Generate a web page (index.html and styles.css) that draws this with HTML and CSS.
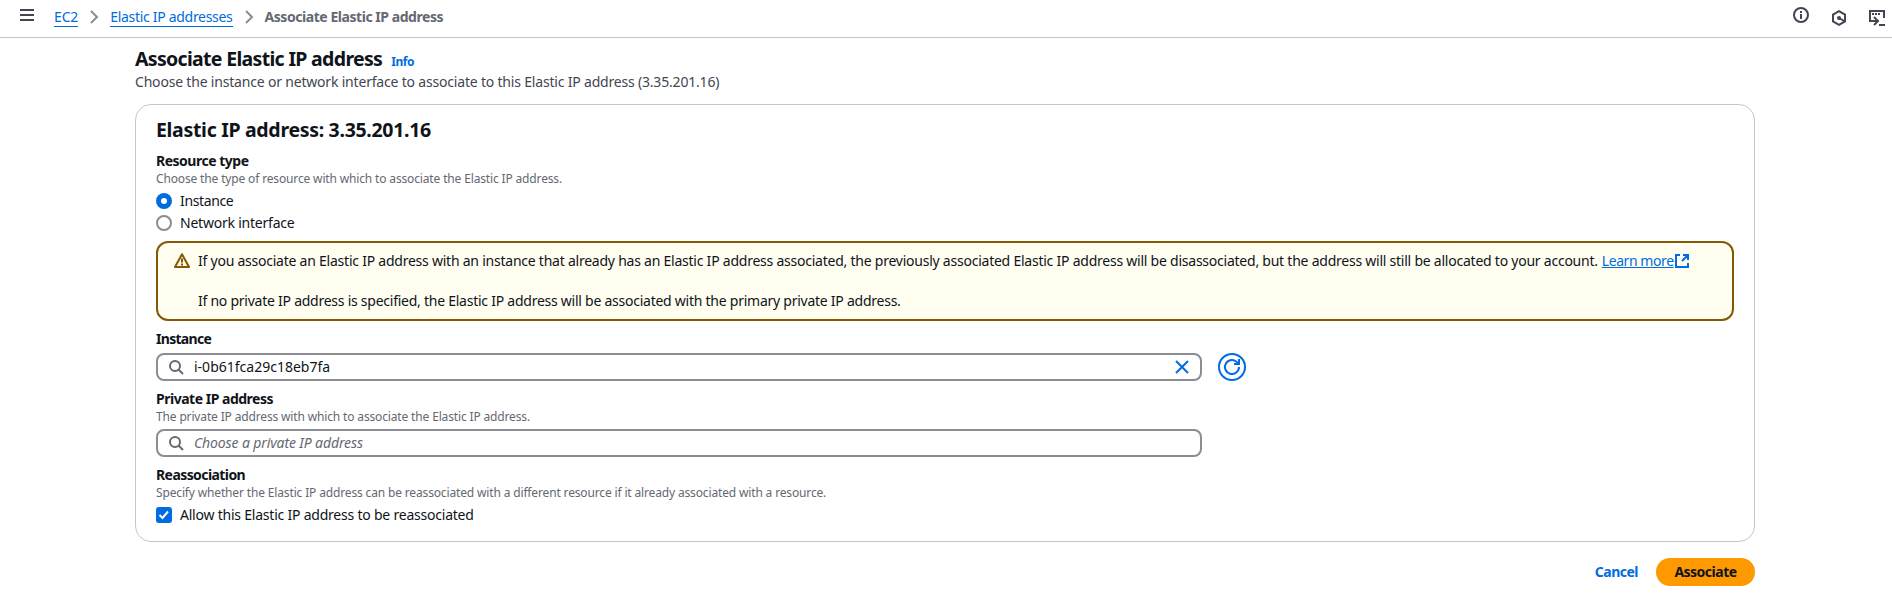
FILE: index.html
```html
<!DOCTYPE html>
<html lang="en">
<head>
<meta charset="utf-8">
<title>Associate Elastic IP address</title>
<link rel="stylesheet" href="styles.css">
</head>
<body>
<header class="topbar">
  <svg class="menu" width="16" height="16" viewBox="0 0 16 16"><path d="M1 3h14M1 8h14M1 13h14" fill="none" stroke="#424650" stroke-width="2"/></svg>
  <nav class="crumbs">
    <a class="crumb crumb-ec2" href="#">EC2</a>
    <svg class="sep" width="16" height="16" viewBox="0 0 16 16"><path d="M5 2l6 6-6 6" fill="none" stroke="#8c8c94" stroke-width="2"/></svg>
    <a class="crumb crumb-eips" href="#">Elastic IP addresses</a>
    <svg class="sep" width="16" height="16" viewBox="0 0 16 16"><path d="M5 2l6 6-6 6" fill="none" stroke="#8c8c94" stroke-width="2"/></svg>
    <span class="crumb-current">Associate Elastic IP address</span>
  </nav>
  <div class="tools">
    <svg class="tool-info" width="16" height="16" viewBox="0 0 16 16" fill="none" stroke="#424650" stroke-width="2"><circle cx="8" cy="8" r="7"/><path d="M8 7v5M8 4v2"/></svg>
    <svg class="tool-low" width="16" height="16" viewBox="0 0 16 16" fill="none" stroke="#424650" stroke-width="2"><path d="M8 1.200l6 3.400v6.800l-6 3.400-6-3.400V4.600z"/><path d="M8 8l6 3.500"/><circle cx="8" cy="8" r="2" fill="#424650" stroke="none"/></svg>
    <svg class="tool-low" width="16" height="16" viewBox="0 0 16 16" fill="none" stroke="#424650" stroke-width="2"><path d="M15 8V1H1v10h7"/><path d="M5 7l4 4-4 4M10 15h6"/><path d="M3 4h2M6 4h2M9 4h2"/></svg>
  </div>
</header>
<main class="page">
  <div class="heading"><h1 class="title">Associate Elastic IP address</h1><a class="info" href="#">Info</a></div>
  <p class="desc">Choose the instance or network interface to associate to this Elastic IP address (3.35.201.16)</p>
  <section class="card">
    <h2 class="card-title">Elastic IP address: 3.35.201.16</h2>
    <div class="field">
      <div class="label">Resource type</div>
      <div class="help">Choose the type of resource with which to associate the Elastic IP address.</div>
      <div class="options">
        <label class="option option-instance"><span class="radio radio-on"></span>Instance</label>
        <label class="option"><span class="radio"></span>Network interface</label>
      </div>
    </div>
    <div class="alert">
      <svg class="warn" width="16" height="16" viewBox="0 0 16 16" fill="none" stroke="#855900" stroke-width="2"><path d="M8 1.200L15 14H1z" stroke-linejoin="round"/><path d="M8 5.500v4M8 10.500v2"/></svg>
      <div class="alert-text">
        <p class="alert-main"><span>If you associate an Elastic IP address with an instance that already has an Elastic IP address associated, the previously associated Elastic IP address will be disassociated, but the address will still be allocated to your account.</span><a class="learn" href="#">Learn more</a><svg class="ext" width="16" height="16" viewBox="0 0 16 16" fill="none" stroke="#006ce0" stroke-width="2"><path d="M6 2H2v12h12v-4M9 2h5v5M14 2L8 8"/></svg></p>
        <p class="alert-note">If no private IP address is specified, the Elastic IP address will be associated with the primary private IP address.</p>
      </div>
    </div>
    <div class="field">
      <div class="label label-instance">Instance</div>
      <div class="control-row">
        <div class="input">
          <svg width="16" height="16" viewBox="0 0 16 16" fill="none" stroke="#656871" stroke-width="2"><circle cx="7" cy="7" r="5"/><path d="M10.500 10.500L15 15"/></svg>
          <span class="value">i-0b61fca29c18eb7fa</span>
          <svg class="clear" width="16" height="16" viewBox="0 0 16 16" fill="none" stroke="#006ce0" stroke-width="2"><path d="M2 2l12 12M14 2L2 14"/></svg>
        </div>
        <button class="refresh" aria-label="Refresh"><svg width="16" height="16" viewBox="0 0 16 16" fill="none" stroke="#006ce0" stroke-width="2"><path d="M15 8a7 7 0 1 1-2-4.900L15 5M10 5h5V0"/></svg></button>
      </div>
    </div>
    <div class="field">
      <div class="label">Private IP address</div>
      <div class="help">The private IP address with which to associate the Elastic IP address.</div>
      <div class="control-row">
        <div class="input">
          <svg width="16" height="16" viewBox="0 0 16 16" fill="none" stroke="#656871" stroke-width="2"><circle cx="7" cy="7" r="5"/><path d="M10.500 10.500L15 15"/></svg>
          <span class="placeholder">Choose a private IP address</span>
        </div>
      </div>
    </div>
    <div class="field">
      <div class="label label-re">Reassociation</div>
      <div class="help">Specify whether the Elastic IP address can be reassociated with a different resource if it already associated with a resource.</div>
      <div class="options">
        <label class="option"><span class="check"><svg width="16" height="16" viewBox="0 0 16 16"><path d="M3.500 8l3 3L12 4.500" fill="none" stroke="#fff" stroke-width="2"/></svg></span>Allow this Elastic IP address to be reassociated</label>
      </div>
    </div>
  </section>
  <footer class="actions"><a class="cancel" href="#">Cancel</a><button class="primary">Associate</button></footer>
</main>
</body>
</html>
```
FILE: styles.css
```css
* { box-sizing: border-box; }
body { margin: 0; background: #fff; color: #0f141a; font: 14px/20px "Noto Sans", "Open Sans", sans-serif; white-space: nowrap; }
h1, h2, p { margin: 0; }
svg { display: block; flex: none; }
a { color: #006ce0; text-decoration: none; }
button { font: inherit; padding: 0; }
.topbar { height: 38px; border-bottom: 1px solid #c6c6cd; display: flex; align-items: flex-start; padding: 7px 7px 0 19px; }
.crumbs { display: flex; margin-left: 19px; }
.sep { margin: 2px 8px 0; }
.crumb { border-bottom: 1px solid #006ce0; height: 20px; }
.crumb-ec2 { letter-spacing: -.15px; }
.crumb-eips { letter-spacing: -.3px; }
.crumb-current { color: #656871; font-weight: 700; letter-spacing: -.45px; }
.tools { display: flex; margin-left: auto; gap: 22px; }
.tool-low { margin-top: 3px; }
.page { width: 1620px; margin-left: 135px; padding-top: 9px; }
.heading { display: flex; height: 24px; align-items: baseline; }
.title { font-size: 19.5px; line-height: 24px; font-weight: 700; letter-spacing: -.68px; }
.info { font-size: 12px; line-height: 16px; font-weight: 700; margin-left: 9px; letter-spacing: -.45px; }
.desc { color: #424650; margin-top: 1px; letter-spacing: -.19px; }
.card { margin-top: 12px; border: 1px solid #c6c6cd; border-radius: 16px; padding: 13px 20px 16px; display: flex; flex-direction: column; gap: 8px; }
.card-title { font-size: 19.5px; line-height: 24px; margin-bottom: 1px; letter-spacing: -.31px; }
.label { font-weight: 700; letter-spacing: -.49px; }
.label-instance { letter-spacing: -.7px; }
.label-re { letter-spacing: -.58px; }
.help { font-size: 12px; line-height: 16px; color: #656871; letter-spacing: -.15px; }
.options { display: flex; flex-direction: column; gap: 2px; margin-top: 4px; }
.option { display: flex; align-items: center; gap: 8px; height: 20px; letter-spacing: -.22px; }
.option-instance { letter-spacing: -.36px; }
.radio { width: 16px; height: 16px; border: 2px solid #8c8c94; border-radius: 50%; }
.radio-on { border: 5px solid #006ce0; }
.check { width: 16px; height: 16px; border-radius: 3px; background: #006ce0; }
.alert { height: 80px; border: 2px solid #855900; border-radius: 12px; background: #fffef0; padding: 8px 16px; display: flex; gap: 8px; }
.warn { margin-top: 2px; }
.alert-text { display: flex; flex-direction: column; gap: 20px; }
.alert-main { display: flex; letter-spacing: -.235px; }
.learn { text-decoration: underline; margin-left: 4px; letter-spacing: -.43px; }
.ext { margin-top: 2px; }
.alert-note { letter-spacing: -.25px; }
.control-row { display: flex; gap: 16px; margin-top: 4px; }
.input { width: 1046px; height: 28px; border: 2px solid #8c8c94; border-radius: 8px; display: flex; align-items: center; padding: 0 10px; gap: 10px; }
.placeholder { font-style: italic; color: #656871; letter-spacing: -.12px; }
.clear { margin-left: auto; }
.refresh { width: 28px; height: 28px; border: 2px solid #006ce0; border-radius: 50%; background: #fff; display: grid; place-items: center; }
.actions { display: flex; justify-content: flex-end; align-items: center; margin-top: 16px; font-weight: 700; gap: 18px; letter-spacing: -.5px; }
.primary { width: 99px; height: 28px; border: 0; border-radius: 14px; background: #f90; color: #0f141a; font-weight: 700; letter-spacing: -.5px; }
```
